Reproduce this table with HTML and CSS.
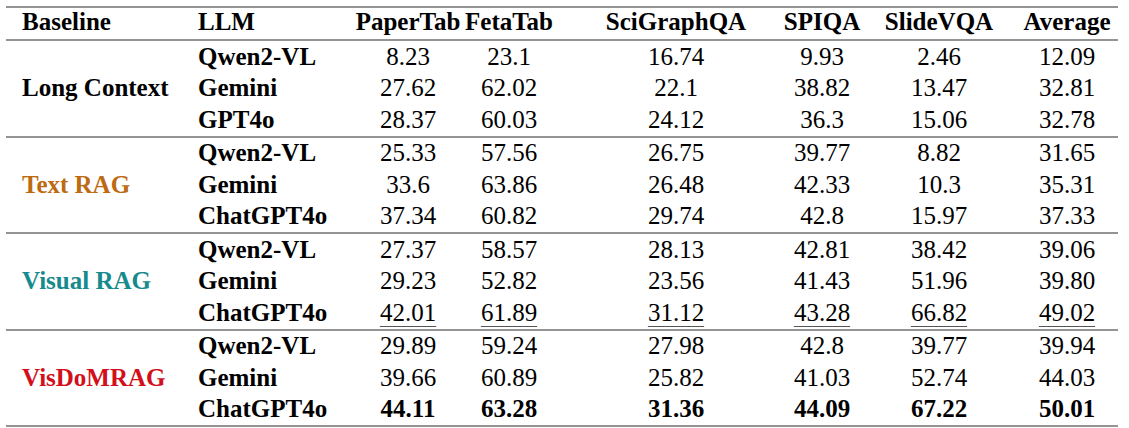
FILE: index.html
```html
<!DOCTYPE html>
<html>
<head>
<meta charset="utf-8">
<link rel="stylesheet" href="styles.css">
</head>
<body>
<div class="tbl">
  <div class="grp head">
    <div class="c lbl">Baseline</div>
    <div class="c llm">LLM</div>
    <div class="c num">PaperTab</div>
    <div class="c num">FetaTab</div>
    <div class="c num">SciGraphQA</div>
    <div class="c num">SPIQA</div>
    <div class="c num">SlideVQA</div>
    <div class="c num">Average</div>
  </div>

  <div class="grp">
    <div class="c lbl span">Long Context</div>
    <div class="c llm">Qwen2-VL</div>
    <div class="c num">8.23</div><div class="c num">23.1</div><div class="c num">16.74</div><div class="c num">9.93</div><div class="c num">2.46</div><div class="c num">12.09</div>
    <div class="c llm">Gemini</div>
    <div class="c num">27.62</div><div class="c num">62.02</div><div class="c num">22.1</div><div class="c num">38.82</div><div class="c num">13.47</div><div class="c num">32.81</div>
    <div class="c llm">GPT4o</div>
    <div class="c num">28.37</div><div class="c num">60.03</div><div class="c num">24.12</div><div class="c num">36.3</div><div class="c num">15.06</div><div class="c num">32.78</div>
  </div>

  <div class="grp">
    <div class="c lbl span text-rag">Text RAG</div>
    <div class="c llm">Qwen2-VL</div>
    <div class="c num">25.33</div><div class="c num">57.56</div><div class="c num">26.75</div><div class="c num">39.77</div><div class="c num">8.82</div><div class="c num">31.65</div>
    <div class="c llm">Gemini</div>
    <div class="c num">33.6</div><div class="c num">63.86</div><div class="c num">26.48</div><div class="c num">42.33</div><div class="c num">10.3</div><div class="c num">35.31</div>
    <div class="c llm">ChatGPT4o</div>
    <div class="c num">37.34</div><div class="c num">60.82</div><div class="c num">29.74</div><div class="c num">42.8</div><div class="c num">15.97</div><div class="c num">37.33</div>
  </div>

  <div class="grp">
    <div class="c lbl span visual-rag">Visual RAG</div>
    <div class="c llm">Qwen2-VL</div>
    <div class="c num">27.37</div><div class="c num">58.57</div><div class="c num">28.13</div><div class="c num">42.81</div><div class="c num">38.42</div><div class="c num">39.06</div>
    <div class="c llm">Gemini</div>
    <div class="c num">29.23</div><div class="c num">52.82</div><div class="c num">23.56</div><div class="c num">41.43</div><div class="c num">51.96</div><div class="c num">39.80</div>
    <div class="c llm">ChatGPT4o</div>
    <div class="c num"><span class="second">42.01</span></div><div class="c num"><span class="second">61.89</span></div><div class="c num"><span class="second">31.12</span></div><div class="c num"><span class="second">43.28</span></div><div class="c num"><span class="second">66.82</span></div><div class="c num"><span class="second">49.02</span></div>
  </div>

  <div class="grp">
    <div class="c lbl span visdom">VisDoMRAG</div>
    <div class="c llm">Qwen2-VL</div>
    <div class="c num">29.89</div><div class="c num">59.24</div><div class="c num">27.98</div><div class="c num">42.8</div><div class="c num">39.77</div><div class="c num">39.94</div>
    <div class="c llm">Gemini</div>
    <div class="c num">39.66</div><div class="c num">60.89</div><div class="c num">25.82</div><div class="c num">41.03</div><div class="c num">52.74</div><div class="c num">44.03</div>
    <div class="c llm">ChatGPT4o</div>
    <div class="c num best">44.11</div><div class="c num best">63.28</div><div class="c num best">31.36</div><div class="c num best">44.09</div><div class="c num best">67.22</div><div class="c num best">50.01</div>
  </div>
</div>
</body>
</html>
```

FILE: styles.css
```css
html, body {
  margin: 0;
  padding: 0;
  background: #ffffff;
}

.tbl {
  margin: 6px 0 0 6px;
  width: 1112px;
  border-top: 2px solid #949494;
  font-family: "Liberation Serif", serif;
  font-size: 25px;
  color: #000000;
}

.grp {
  display: grid;
  grid-template-columns: 180px 164px 116px 86px 248px 44px 190px 66px;
  grid-auto-rows: 31.5px;
  border-bottom: 2px solid #949494;
}

.grp.head {
  grid-auto-rows: 31px;
  font-weight: bold;
}

.grp.head .c {
  padding-bottom: 4px;
}

.c {
  display: flex;
  align-items: center;
  white-space: nowrap;
}

.lbl {
  padding-left: 16px;
  font-weight: bold;
}

.lbl.span {
  grid-row: span 3;
}

.llm {
  padding-left: 12px;
  font-weight: bold;
}

.num {
  justify-content: center;
}

.best {
  font-weight: bold;
}

.second {
  text-decoration: underline;
  text-decoration-color: #555555;
  text-decoration-thickness: 1px;
  text-underline-offset: 5px;
}

.text-rag {
  color: #bd6a12;
}

.visual-rag {
  color: #178a8e;
}

.visdom {
  color: #d20f1a;
}
```
